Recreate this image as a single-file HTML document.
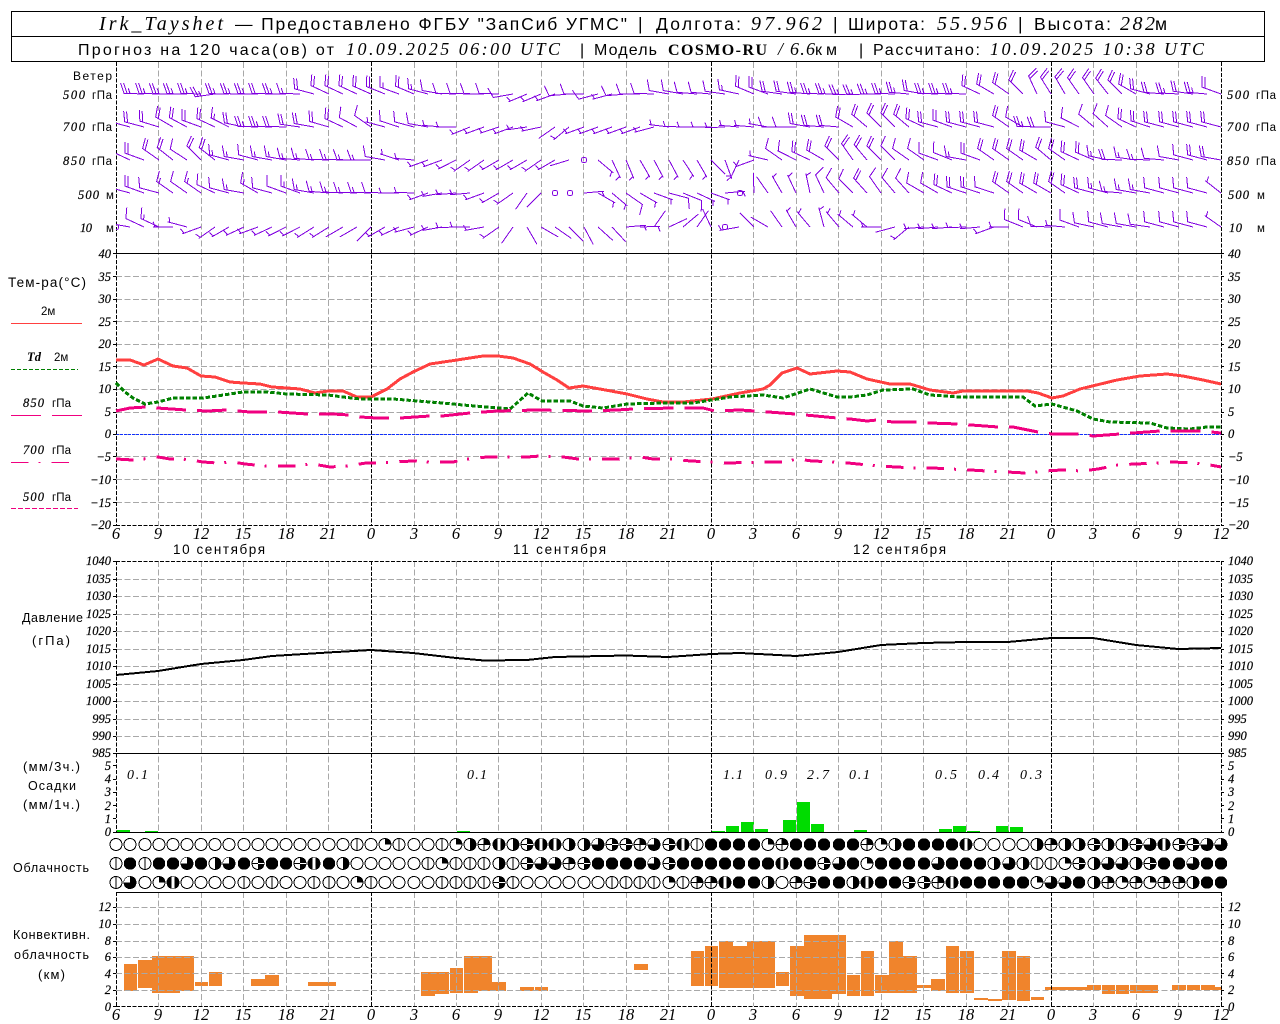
<!DOCTYPE html>
<html lang="ru"><head><meta charset="utf-8"><title>Irk_Tayshet</title>
<style>
html,body{margin:0;padding:0;background:#fff}
svg{display:block}
text{font-family:"Liberation Sans",sans-serif;fill:#000;font-size:13px}
.i{font-family:"Liberation Serif",serif;font-style:italic}
.a{font-family:"Liberation Serif",serif;font-style:italic;font-size:12.5px;stroke:#000;stroke-width:.2}
.l text,.l{text-anchor:end}
.x text{font-family:"Liberation Serif",serif;font-style:italic;font-size:16.5px;text-anchor:middle}
.h{font-size:17.5px}
.k{font-size:16px}
.p{font-family:"Liberation Serif",serif;font-style:italic;font-size:14px}
.w{fill:none;stroke:#8000e0;stroke-width:1}
</style></head><body>
<svg width="1280" height="1024" viewBox="0 0 1280 1024" xmlns="http://www.w3.org/2000/svg" shape-rendering="crispEdges">
<defs>
<clipPath id="wc"><rect x="116" y="62" width="1106" height="190"/></clipPath>
<path id="a" d="M0 0V-20"/>
<path id="b" d="M0 0V-20M0-18l5.2-1.9"/>
<path id="c" d="M0 0V-20l10.3-3.8"/>
<path id="d" d="M0 0V-20l10.3-3.8M0-17l5.2-1.9"/>
<path id="e" d="M0 0V-20l10.3-3.8M0-17l10.3-3.8"/>
<path id="g" d="M0 0V-20l10.3-3.8M0-17l10.3-3.8M0-14l5.2-1.9"/>
<g id="o0"><circle r="6" fill="#fff" stroke="#000"/></g>
<g id="o1"><circle r="6" fill="#fff" stroke="#000"/><path d="M0-6V6" stroke="#000"/></g>
<g id="o2"><circle r="6" fill="#fff" stroke="#000"/><path d="M0 0V-6A6 6 0 0 1 6 0Z"/></g>
<g id="o3"><circle r="6" fill="#fff" stroke="#000"/><path d="M0 0V-6A6 6 0 0 1 6 0Z"/><path d="M0-6V6M-6 0H6" stroke="#000"/></g>
<g id="o4"><circle r="6" fill="#fff" stroke="#000"/><path d="M0-6A6 6 0 0 1 0 6Z"/></g>
<g id="o5"><circle r="6" fill="#fff" stroke="#000"/><path d="M0-6A6 6 0 0 1 0 6Z"/><path d="M-6 0H6" stroke="#000"/><path d="M0 0H6" stroke="#fff"/></g>
<g id="o6"><circle r="6" stroke="#000"/><path d="M0 0V-6A6 6 0 0 0 -6 0Z" fill="#fff"/></g>
<g id="o7"><circle r="6" stroke="#000"/><path d="M-1.5-6H1.5V6H-1.5Z" fill="#fff"/></g>
<g id="o8"><circle r="6.2"/></g>
</defs>

<!-- header -->
<rect x="11.5" y="11.5" width="1253" height="50" fill="none" stroke="#000"/>
<path d="M11 36.5H1265" stroke="#000"/>
<text class="i" x="99" y="30" font-size="20" style="font-size:20px" textLength="124">Irk_Tayshet</text>
<text class="h" x="235" y="30" textLength="392">— Предоставлено ФГБУ "ЗапСиб УГМС"</text>
<text class="h" x="638" y="30">|</text>
<text class="h" x="656" y="30" textLength="85">Долгота:</text>
<text class="i" x="751" y="30" style="font-size:20px" textLength="71">97.962</text>
<text class="h" x="833" y="30">|</text>
<text class="h" x="848" y="30" textLength="77">Широта:</text>
<text class="i" x="937" y="30" style="font-size:20px" textLength="70">55.956</text>
<text class="h" x="1018" y="30">|</text>
<text class="h" x="1034" y="30" textLength="77">Высота:</text>
<text class="i" x="1120" y="30" style="font-size:20px" textLength="35">282</text>
<text class="h" x="1155" y="30" textLength="15">м</text>

<text class="k" x="78" y="55" textLength="256">Прогноз на 120 часа(ов) от</text>
<text class="i" x="346" y="55" style="font-size:18px;font-weight:400" textLength="214">10.09.2025 06:00 UTC</text>
<text class="k" x="580" y="55">|</text>
<text class="k" x="594" y="55" textLength="63">Модель</text>
<text x="668" y="55" style="font-family:'Liberation Serif',serif;font-weight:bold;font-size:16px" textLength="99">COSMO-RU</text>
<text class="i" x="778" y="55" style="font-size:18px">/</text>
<text class="i" x="790" y="55" style="font-size:18px" textLength="25">6.6</text>
<text class="k" x="815" y="55" textLength="22">км</text>
<text class="k" x="859" y="55">|</text>
<text class="k" x="873" y="55" textLength="107">Рассчитано:</text>
<text class="i" x="990" y="55" style="font-size:18px" textLength="214">10.09.2025 10:38 UTC</text>

<!-- orange bars -->
<path fill="#f0842c" d="M124 964h13v27h-13zM138 960h14v28h-14zM152 956h28v37h-28zM180 956h14v35h-14zM195 982h13v4h-13zM209 972h13v14h-13zM251 979h14v7h-14zM265 975h14v11h-14zM308 982h28v4h-28zM421 972h14v24h-14zM435 972h14v22h-14zM450 968h13v25h-13zM464 956h14v37h-14zM478 956h14v35h-14zM492 982h14v9h-14zM520 987h14v4h-14zM535 987h13v4h-13zM634 964h14v6h-14zM691 951h13v35h-13zM705 946h13v40h-13zM719 941h14v47h-14zM733 946h14v42h-14zM747 941h28v47h-28zM776 972h13v14h-13zM790 946h14v50h-14zM804 935h28v64h-28zM832 935h14v59h-14zM847 975h13v21h-13zM861 951h13v45h-13zM875 975h14v18h-14zM889 941h14v52h-14zM903 956h14v37h-14zM917 985h14v3h-14zM931 979h14v12h-14zM946 946h13v47h-13zM960 951h14v42h-14zM974 998h14v2h-14zM988 999h14v2h-14zM1002 951h14v49h-14zM1017 956h13v45h-13zM1031 997h13v3h-13zM1045 987h42v3h-42zM1087 985h14v5h-14zM1102 985h13v9h-13zM1116 985h13v9h-13zM1130 985h28v8h-28zM1172 985h14v5h-14zM1187 985h13v5h-13zM1201 985h14v5h-14zM1215 987h7v3h-7z"/>
<!-- green bars -->
<path fill="#00dc00" d="M117 830h13v2h-13zM145 831h13v1h-13zM457 831h13v1h-13zM712 831h13v1h-13zM726 826h13v6h-13zM741 822h13v10h-13zM755 829h13v3h-13zM783 820h13v12h-13zM797 802h13v30h-13zM811 824h13v8h-13zM854 830h13v2h-13zM939 829h13v3h-13zM953 826h13v6h-13zM967 831h13v1h-13zM996 826h13v6h-13zM1010 827h13v5h-13z"/>

<!-- grid -->
<path fill="none" stroke="#a8a8a8" stroke-dasharray="6 2.5" d="M158.5 62V525M201.5 62V525M243.5 62V525M286.5 62V525M328.5 62V525M414.5 62V525M456.5 62V525M498.5 62V525M541.5 62V525M583.5 62V525M626.5 62V525M668.5 62V525M753.5 62V525M796.5 62V525M838.5 62V525M881.5 62V525M923.5 62V525M966.5 62V525M1008.5 62V525M1093.5 62V525M1136.5 62V525M1178.5 62V525
M158.5 561V832M201.5 561V832M243.5 561V832M286.5 561V832M328.5 561V832M414.5 561V832M456.5 561V832M498.5 561V832M541.5 561V832M583.5 561V832M626.5 561V832M668.5 561V832M753.5 561V832M796.5 561V832M838.5 561V832M881.5 561V832M923.5 561V832M966.5 561V832M1008.5 561V832M1093.5 561V832M1136.5 561V832M1178.5 561V832
M158.5 892V1006M201.5 892V1006M243.5 892V1006M286.5 892V1006M328.5 892V1006M414.5 892V1006M456.5 892V1006M498.5 892V1006M541.5 892V1006M583.5 892V1006M626.5 892V1006M668.5 892V1006M753.5 892V1006M796.5 892V1006M838.5 892V1006M881.5 892V1006M923.5 892V1006M966.5 892V1006M1008.5 892V1006M1093.5 892V1006M1136.5 892V1006M1178.5 892V1006
M116 276.5H1221M116 299.5H1221M116 321.5H1221M116 344.5H1221M116 366.5H1221M116 389.5H1221M116 412.5H1221M116 434.5H1221M116 456.5H1221M116 479.5H1221M116 502.5H1221
M116 579.5H1221M116 596.5H1221M116 614.5H1221M116 631.5H1221M116 649.5H1221M116 666.5H1221M116 684.5H1221M116 701.5H1221M116 719.5H1221M116 736.5H1221
M116 907.5H1221M116 924.5H1221M116 941.5H1221M116 957.5H1221M116 973.5H1221M116 990.5H1221"/>
<path d="M116 434.5H1221" fill="none" stroke="#1030ff" stroke-dasharray="3 1"/>
<!-- axes -->
<path fill="none" stroke="#000" stroke-dasharray="4 1.5" d="M116.5 62V525M371.5 62V525M711.5 62V525M1051.5 62V525M1221.5 62V525M116.5 561V832M371.5 561V832M711.5 561V832M1051.5 561V832M1221.5 561V832M116.5 892V1006M371.5 892V1006M711.5 892V1006M1051.5 892V1006M1221.5 892V1006M116 525.5H1221M116 561.5H1221M116 1006.5H1221"/>
<path fill="none" stroke="#000" d="M116 253.5H1221M116 753.5H1221M116 832.5H1221M116 892.5H1221
M113 253.5h3M113 276.5h3M113 299.5h3M113 321.5h3M113 344.5h3M113 366.5h3M113 389.5h3M113 412.5h3M113 434.5h3M113 456.5h3M113 479.5h3M113 502.5h3M113 525.5h3
M1221 253.5h3M1221 276.5h3M1221 299.5h3M1221 321.5h3M1221 344.5h3M1221 366.5h3M1221 389.5h3M1221 412.5h3M1221 434.5h3M1221 456.5h3M1221 479.5h3M1221 502.5h3M1221 525.5h3
M113 561.5h3M113 579.5h3M113 596.5h3M113 614.5h3M113 631.5h3M113 649.5h3M113 666.5h3M113 684.5h3M113 701.5h3M113 719.5h3M113 736.5h3M113 753.5h3
M1221 561.5h3M1221 579.5h3M1221 596.5h3M1221 614.5h3M1221 631.5h3M1221 649.5h3M1221 666.5h3M1221 684.5h3M1221 701.5h3M1221 719.5h3M1221 736.5h3M1221 753.5h3
M113 765.5h3M113 779.5h3M113 792.5h3M113 805.5h3M113 818.5h3M113 832.5h3M1221 765.5h3M1221 779.5h3M1221 792.5h3M1221 805.5h3M1221 818.5h3M1221 832.5h3
M113 907.5h3M113 924.5h3M113 941.5h3M113 957.5h3M113 973.5h3M113 990.5h3M113 1006.5h3M1221 907.5h3M1221 924.5h3M1221 941.5h3M1221 957.5h3M1221 973.5h3M1221 990.5h3M1221 1006.5h3"/>

<!-- temperature curves -->
<polyline fill="none" stroke="#ff4040" stroke-width="3" points="116,360 130,360 144,365 158,359 173,366 187,368 201,376 215,377 230,382 243,383 260,384 272,387 287,388 300,389 315,393 328,391 343,391 357,397 371,397 387,389 400,379 413,372 430,364 457,360 483,356 498,356 513,358 530,364 543,372 557,380 569,388 583,386 600,389 627,394 647,399 663,402 683,402 712,399 740,393 763,389 770,385 782,373 797,368 810,374 837,371 850,372 867,379 890,384 910,384 930,390 953,393 963,391 997,391 1027,391 1038,393 1052,398 1063,396 1080,389 1117,380 1140,376 1167,374 1183,376 1203,380 1221,384"/>
<polyline fill="none" stroke="#008000" stroke-width="3" stroke-dasharray="4.5 2" points="116,383 125,392 133,398 145,404 158,402 173,398 203,398 217,396 230,394 243,392 267,392 287,394 328,395 343,397 360,399 393,399 430,402 443,403 463,405 487,407 510,409 518,402 528,393 542,401 570,401 583,406 603,408 627,404 663,403 693,403 730,397 763,395 783,398 810,389 837,397 850,397 867,395 883,390 913,389 930,395 960,397 1023,397 1035,406 1052,404 1077,411 1093,419 1110,422 1150,423 1167,428 1190,429 1207,427 1221,427"/>
<polyline fill="none" stroke="#f00080" stroke-width="3" stroke-dasharray="29.7 11" points="116,411 130,408 146,407 157,408 186,410 207,411 227,410 250,412 278,412 307,414 333,414 349,415 360,417 377,418 400,418 430,416 442,416 470,413 497,411 537,410 590,411 617,410 633,409 673,408 703,408 715,411 740,410 755,411 795,414 837,418 850,419 867,421 877,420 893,422 917,422 930,423 958,424 998,427 1013,427 1038,432 1052,434 1080,434 1093,436 1120,434 1133,433 1160,431 1202,431 1221,433"/>
<polyline fill="none" stroke="#f00080" stroke-width="3" stroke-dasharray="17.5 10 2 11.2" points="116,459 133,460 143,459 158,457 170,459 182,459 191,460 203,462 217,463 233,462 245,464 265,466 293,466 313,464 330,467 347,466 366,463 380,463 393,462 413,461 430,462 440,462 453,462 467,459 487,457 503,457 527,457 540,456 563,457 578,459 600,459 617,459 640,457 653,459 673,459 690,461 713,462 727,463 763,462 783,462 797,459 812,461 838,462 858,464 877,466 897,467 913,468 933,468 950,469 970,470 987,471 1007,472 1025,473 1045,471 1062,470 1082,471 1098,469 1118,465 1135,464 1160,463 1173,462 1193,463 1210,465 1221,467"/>
<!-- pressure -->
<polyline fill="none" stroke="#000" stroke-width="2" points="116,675 158,671 201,664 243,660 272,656 328,652.5 371,650 413,653 456,658 484,660.5 527,660 555,657 626,655.5 668,657 711,654 740,653 796,656 838,652 881,645 923,643 966,642 1008,642 1051,638 1093,638 1136,645 1178,649 1221,648"/>

<!-- wind -->
<g class="w" clip-path="url(#wc)">
<g transform="translate(0 94)">
<use href="#g" transform="translate(144)rotate(272)"/><use href="#g" transform="translate(159)rotate(272)"/><use href="#g" transform="translate(173)rotate(271)"/><use href="#g" transform="translate(187)rotate(271)"/><use href="#g" transform="translate(201)rotate(272)"/><use href="#g" transform="translate(215)rotate(262)"/><use href="#g" transform="translate(229)rotate(271)"/><use href="#g" transform="translate(244)rotate(271)"/><use href="#g" transform="translate(258)rotate(271)"/><use href="#e" transform="translate(272)rotate(272)"/><use href="#g" transform="translate(286)rotate(271)"/><use href="#d" transform="translate(300)rotate(272)"/><use href="#e" transform="translate(314)rotate(285)"/><use href="#e" transform="translate(329)rotate(295)"/><use href="#e" transform="translate(343)rotate(295)"/><use href="#e" transform="translate(357)rotate(295)"/><use href="#e" transform="translate(371)rotate(294)"/><use href="#e" transform="translate(385)rotate(292)"/><use href="#d" transform="translate(399)rotate(290)"/><use href="#e" transform="translate(414)rotate(293)"/><use href="#d" transform="translate(428)rotate(285)"/><use href="#c" transform="translate(442)rotate(280)"/><use href="#c" transform="translate(456)rotate(272)"/><use href="#c" transform="translate(470)rotate(272)"/><use href="#c" transform="translate(484)rotate(271)"/><use href="#c" transform="translate(499)rotate(272)"/><use href="#c" transform="translate(513)rotate(260)"/><use href="#b" transform="translate(527)rotate(247)"/><use href="#b" transform="translate(541)rotate(247)"/><use href="#b" transform="translate(555)rotate(250)"/><use href="#c" transform="translate(569)rotate(265)"/><use href="#c" transform="translate(584)rotate(270)"/><use href="#c" transform="translate(598)rotate(255)"/><use href="#b" transform="translate(612)rotate(255)"/><use href="#c" transform="translate(626)rotate(265)"/><use href="#c" transform="translate(640)rotate(270)"/><use href="#c" transform="translate(654)rotate(272)"/><use href="#c" transform="translate(669)rotate(280)"/><use href="#c" transform="translate(683)rotate(280)"/><use href="#c" transform="translate(697)rotate(275)"/><use href="#c" transform="translate(711)rotate(275)"/><use href="#c" transform="translate(725)rotate(278)"/><use href="#d" transform="translate(739)rotate(282)"/><use href="#e" transform="translate(754)rotate(293)"/><use href="#e" transform="translate(768)rotate(290)"/><use href="#e" transform="translate(782)rotate(278)"/><use href="#e" transform="translate(796)rotate(278)"/><use href="#g" transform="translate(810)rotate(275)"/><use href="#g" transform="translate(824)rotate(272)"/><use href="#g" transform="translate(839)rotate(271)"/><use href="#g" transform="translate(853)rotate(268)"/><use href="#g" transform="translate(867)rotate(268)"/><use href="#g" transform="translate(881)rotate(270)"/><use href="#g" transform="translate(895)rotate(272)"/><use href="#g" transform="translate(909)rotate(275)"/><use href="#e" transform="translate(924)rotate(280)"/><use href="#g" transform="translate(938)rotate(272)"/><use href="#g" transform="translate(952)rotate(272)"/><use href="#g" transform="translate(966)rotate(272)"/><use href="#e" transform="translate(980)rotate(295)"/><use href="#e" transform="translate(994)rotate(300)"/><use href="#e" transform="translate(1009)rotate(305)"/><use href="#e" transform="translate(1023)rotate(315)"/><use href="#e" transform="translate(1037)rotate(335)"/><use href="#e" transform="translate(1051)rotate(328)"/><use href="#e" transform="translate(1065)rotate(330)"/><use href="#e" transform="translate(1079)rotate(325)"/><use href="#e" transform="translate(1094)rotate(325)"/><use href="#e" transform="translate(1108)rotate(322)"/><use href="#e" transform="translate(1122)rotate(315)"/><use href="#e" transform="translate(1136)rotate(300)"/><use href="#e" transform="translate(1150)rotate(285)"/><use href="#e" transform="translate(1164)rotate(275)"/><use href="#g" transform="translate(1179)rotate(273)"/><use href="#e" transform="translate(1193)rotate(278)"/><use href="#g" transform="translate(1207)rotate(275)"/><use href="#e" transform="translate(1221)rotate(290)"/>
</g>
<g transform="translate(0 127)">
<use href="#a" transform="translate(130)rotate(285)"/><use href="#e" transform="translate(144)rotate(285)"/><use href="#e" transform="translate(159)rotate(287)"/><use href="#e" transform="translate(173)rotate(300)"/><use href="#e" transform="translate(187)rotate(298)"/><use href="#e" transform="translate(201)rotate(290)"/><use href="#e" transform="translate(215)rotate(295)"/><use href="#d" transform="translate(229)rotate(297)"/><use href="#e" transform="translate(244)rotate(282)"/><use href="#g" transform="translate(258)rotate(272)"/><use href="#g" transform="translate(272)rotate(272)"/><use href="#e" transform="translate(286)rotate(272)"/><use href="#e" transform="translate(300)rotate(278)"/><use href="#e" transform="translate(314)rotate(280)"/><use href="#e" transform="translate(329)rotate(286)"/><use href="#e" transform="translate(343)rotate(295)"/><use href="#c" transform="translate(357)rotate(298)"/><use href="#c" transform="translate(371)rotate(305)"/><use href="#b" transform="translate(385)rotate(285)"/><use href="#c" transform="translate(399)rotate(288)"/><use href="#c" transform="translate(414)rotate(285)"/><use href="#c" transform="translate(428)rotate(280)"/><use href="#b" transform="translate(442)rotate(275)"/><use href="#b" transform="translate(456)rotate(270)"/><use href="#b" transform="translate(470)rotate(248)"/><use href="#b" transform="translate(484)rotate(250)"/><use href="#b" transform="translate(499)rotate(252)"/><use href="#b" transform="translate(513)rotate(250)"/><use href="#b" transform="translate(527)rotate(262)"/><use href="#b" transform="translate(541)rotate(258)"/><use href="#a" transform="translate(555)rotate(235)"/><use href="#b" transform="translate(569)rotate(230)"/><use href="#b" transform="translate(584)rotate(250)"/><use href="#b" transform="translate(598)rotate(250)"/><use href="#b" transform="translate(612)rotate(250)"/><use href="#b" transform="translate(626)rotate(250)"/><use href="#b" transform="translate(640)rotate(250)"/><use href="#b" transform="translate(654)rotate(255)"/><use href="#b" transform="translate(669)rotate(277)"/><use href="#b" transform="translate(683)rotate(272)"/><use href="#b" transform="translate(697)rotate(270)"/><use href="#b" transform="translate(711)rotate(270)"/><use href="#b" transform="translate(725)rotate(268)"/><use href="#b" transform="translate(739)rotate(275)"/><use href="#b" transform="translate(754)rotate(275)"/><use href="#b" transform="translate(768)rotate(280)"/><use href="#c" transform="translate(782)rotate(270)"/><use href="#c" transform="translate(796)rotate(270)"/><use href="#e" transform="translate(810)rotate(280)"/><use href="#e" transform="translate(824)rotate(275)"/><use href="#e" transform="translate(839)rotate(275)"/><use href="#e" transform="translate(853)rotate(300)"/><use href="#e" transform="translate(867)rotate(310)"/><use href="#e" transform="translate(881)rotate(315)"/><use href="#e" transform="translate(895)rotate(315)"/><use href="#e" transform="translate(909)rotate(310)"/><use href="#e" transform="translate(924)rotate(295)"/><use href="#e" transform="translate(938)rotate(285)"/><use href="#e" transform="translate(952)rotate(290)"/><use href="#e" transform="translate(966)rotate(285)"/><use href="#e" transform="translate(980)rotate(285)"/><use href="#e" transform="translate(994)rotate(285)"/><use href="#e" transform="translate(1009)rotate(305)"/><use href="#c" transform="translate(1023)rotate(300)"/><use href="#g" transform="translate(1037)rotate(272)"/><use href="#e" transform="translate(1051)rotate(270)"/><use href="#c" transform="translate(1065)rotate(285)"/><use href="#c" transform="translate(1079)rotate(297)"/><use href="#c" transform="translate(1094)rotate(310)"/><use href="#c" transform="translate(1108)rotate(312)"/><use href="#c" transform="translate(1122)rotate(305)"/><use href="#e" transform="translate(1136)rotate(295)"/><use href="#e" transform="translate(1150)rotate(288)"/><use href="#e" transform="translate(1164)rotate(285)"/><use href="#e" transform="translate(1179)rotate(285)"/><use href="#e" transform="translate(1193)rotate(285)"/><use href="#e" transform="translate(1207)rotate(285)"/><use href="#e" transform="translate(1221)rotate(285)"/>
</g>
<g transform="translate(0 160)">
<use href="#a" transform="translate(130)rotate(295)"/><use href="#e" transform="translate(144)rotate(290)"/><use href="#e" transform="translate(159)rotate(305)"/><use href="#e" transform="translate(173)rotate(308)"/><use href="#c" transform="translate(187)rotate(303)"/><use href="#e" transform="translate(201)rotate(315)"/><use href="#e" transform="translate(215)rotate(308)"/><use href="#d" transform="translate(229)rotate(285)"/><use href="#d" transform="translate(244)rotate(280)"/><use href="#c" transform="translate(258)rotate(285)"/><use href="#d" transform="translate(272)rotate(280)"/><use href="#d" transform="translate(286)rotate(280)"/><use href="#d" transform="translate(300)rotate(275)"/><use href="#d" transform="translate(314)rotate(275)"/><use href="#d" transform="translate(329)rotate(272)"/><use href="#d" transform="translate(343)rotate(272)"/><use href="#d" transform="translate(357)rotate(271)"/><use href="#d" transform="translate(371)rotate(270)"/><use href="#c" transform="translate(385)rotate(280)"/><use href="#b" transform="translate(399)rotate(288)"/><use href="#b" transform="translate(414)rotate(275)"/><use href="#b" transform="translate(428)rotate(250)"/><use href="#b" transform="translate(442)rotate(250)"/><use href="#b" transform="translate(456)rotate(243)"/><use href="#b" transform="translate(470)rotate(235)"/><use href="#b" transform="translate(484)rotate(235)"/><use href="#b" transform="translate(499)rotate(240)"/><use href="#b" transform="translate(513)rotate(240)"/><use href="#b" transform="translate(527)rotate(240)"/><use href="#b" transform="translate(541)rotate(235)"/><use href="#b" transform="translate(555)rotate(240)"/><use href="#a" transform="translate(569)rotate(253)"/><use href="#b" transform="translate(598)rotate(130)"/><use href="#b" transform="translate(612)rotate(155)"/><use href="#b" transform="translate(626)rotate(157)"/><use href="#b" transform="translate(640)rotate(150)"/><use href="#b" transform="translate(654)rotate(152)"/><use href="#b" transform="translate(669)rotate(152)"/><use href="#b" transform="translate(683)rotate(147)"/><use href="#b" transform="translate(697)rotate(150)"/><use href="#a" transform="translate(711)rotate(135)"/><use href="#b" transform="translate(725)rotate(160)"/><use href="#b" transform="translate(739)rotate(205)"/><use href="#b" transform="translate(754)rotate(250)"/><use href="#b" transform="translate(768)rotate(283)"/><use href="#c" transform="translate(782)rotate(305)"/><use href="#c" transform="translate(796)rotate(297)"/><use href="#e" transform="translate(810)rotate(295)"/><use href="#e" transform="translate(824)rotate(300)"/><use href="#e" transform="translate(839)rotate(315)"/><use href="#e" transform="translate(853)rotate(325)"/><use href="#e" transform="translate(867)rotate(320)"/><use href="#e" transform="translate(881)rotate(315)"/><use href="#c" transform="translate(895)rotate(315)"/><use href="#c" transform="translate(909)rotate(305)"/><use href="#c" transform="translate(924)rotate(305)"/><use href="#c" transform="translate(938)rotate(290)"/><use href="#c" transform="translate(952)rotate(292)"/><use href="#d" transform="translate(966)rotate(280)"/><use href="#e" transform="translate(980)rotate(290)"/><use href="#e" transform="translate(994)rotate(305)"/><use href="#e" transform="translate(1009)rotate(305)"/><use href="#e" transform="translate(1023)rotate(305)"/><use href="#e" transform="translate(1037)rotate(300)"/><use href="#e" transform="translate(1051)rotate(310)"/><use href="#e" transform="translate(1065)rotate(305)"/><use href="#e" transform="translate(1079)rotate(295)"/><use href="#e" transform="translate(1094)rotate(293)"/><use href="#d" transform="translate(1108)rotate(282)"/><use href="#e" transform="translate(1122)rotate(272)"/><use href="#d" transform="translate(1136)rotate(278)"/><use href="#d" transform="translate(1150)rotate(272)"/><use href="#c" transform="translate(1164)rotate(275)"/><use href="#c" transform="translate(1179)rotate(280)"/><use href="#c" transform="translate(1193)rotate(285)"/><use href="#e" transform="translate(1207)rotate(285)"/><use href="#e" transform="translate(1221)rotate(280)"/>
<circle class="w" cx="584" r="2.7"/>
</g>
<g transform="translate(0 193)">
<use href="#a" transform="translate(130)rotate(285)"/><use href="#e" transform="translate(144)rotate(290)"/><use href="#c" transform="translate(159)rotate(285)"/><use href="#d" transform="translate(173)rotate(305)"/><use href="#c" transform="translate(187)rotate(305)"/><use href="#d" transform="translate(201)rotate(305)"/><use href="#c" transform="translate(215)rotate(295)"/><use href="#c" transform="translate(229)rotate(285)"/><use href="#d" transform="translate(244)rotate(280)"/><use href="#d" transform="translate(258)rotate(300)"/><use href="#c" transform="translate(272)rotate(285)"/><use href="#c" transform="translate(286)rotate(290)"/><use href="#d" transform="translate(300)rotate(290)"/><use href="#d" transform="translate(314)rotate(280)"/><use href="#d" transform="translate(329)rotate(275)"/><use href="#d" transform="translate(343)rotate(273)"/><use href="#d" transform="translate(357)rotate(272)"/><use href="#d" transform="translate(371)rotate(272)"/><use href="#c" transform="translate(385)rotate(272)"/><use href="#b" transform="translate(399)rotate(270)"/><use href="#b" transform="translate(414)rotate(272)"/><use href="#b" transform="translate(428)rotate(250)"/><use href="#b" transform="translate(442)rotate(260)"/><use href="#b" transform="translate(456)rotate(265)"/><use href="#b" transform="translate(470)rotate(265)"/><use href="#b" transform="translate(484)rotate(250)"/><use href="#b" transform="translate(499)rotate(240)"/><use href="#b" transform="translate(513)rotate(235)"/><use href="#a" transform="translate(527)rotate(215)"/><use href="#a" transform="translate(541)rotate(225)"/><use href="#b" transform="translate(584)rotate(85)"/><use href="#b" transform="translate(598)rotate(120)"/><use href="#b" transform="translate(612)rotate(130)"/><use href="#c" transform="translate(626)rotate(125)"/><use href="#b" transform="translate(640)rotate(120)"/><use href="#b" transform="translate(654)rotate(110)"/><use href="#c" transform="translate(669)rotate(105)"/><use href="#c" transform="translate(683)rotate(112)"/><use href="#b" transform="translate(697)rotate(115)"/><use href="#b" transform="translate(711)rotate(110)"/><use href="#b" transform="translate(725)rotate(85)"/><use href="#a" transform="translate(754)rotate(358)"/><use href="#a" transform="translate(768)rotate(325)"/><use href="#b" transform="translate(782)rotate(330)"/><use href="#b" transform="translate(796)rotate(335)"/><use href="#b" transform="translate(810)rotate(348)"/><use href="#c" transform="translate(824)rotate(335)"/><use href="#c" transform="translate(839)rotate(320)"/><use href="#c" transform="translate(853)rotate(315)"/><use href="#e" transform="translate(867)rotate(318)"/><use href="#c" transform="translate(881)rotate(325)"/><use href="#c" transform="translate(895)rotate(320)"/><use href="#c" transform="translate(909)rotate(318)"/><use href="#c" transform="translate(924)rotate(300)"/><use href="#c" transform="translate(938)rotate(300)"/><use href="#e" transform="translate(952)rotate(295)"/><use href="#e" transform="translate(966)rotate(288)"/><use href="#e" transform="translate(980)rotate(288)"/><use href="#c" transform="translate(994)rotate(288)"/><use href="#e" transform="translate(1009)rotate(305)"/><use href="#e" transform="translate(1023)rotate(305)"/><use href="#e" transform="translate(1037)rotate(300)"/><use href="#e" transform="translate(1051)rotate(300)"/><use href="#e" transform="translate(1065)rotate(305)"/><use href="#e" transform="translate(1079)rotate(295)"/><use href="#e" transform="translate(1094)rotate(285)"/><use href="#d" transform="translate(1108)rotate(285)"/><use href="#d" transform="translate(1122)rotate(275)"/><use href="#d" transform="translate(1136)rotate(280)"/><use href="#d" transform="translate(1150)rotate(280)"/><use href="#c" transform="translate(1164)rotate(285)"/><use href="#c" transform="translate(1179)rotate(285)"/><use href="#c" transform="translate(1193)rotate(285)"/><use href="#c" transform="translate(1207)rotate(285)"/><use href="#b" transform="translate(1221)rotate(308)"/>
<circle class="w" cx="555" r="2.7"/><circle class="w" cx="570" r="2.7"/><circle class="w" cx="740" r="2.7"/>
</g>
<g transform="translate(0 227)">
<circle class="w" cx="116" r="2.7"/>
<use href="#a" transform="translate(130)rotate(280)"/><use href="#c" transform="translate(144)rotate(295)"/><use href="#d" transform="translate(159)rotate(295)"/><use href="#b" transform="translate(173)rotate(270)"/><use href="#b" transform="translate(187)rotate(285)"/><use href="#b" transform="translate(201)rotate(250)"/><use href="#b" transform="translate(215)rotate(235)"/><use href="#b" transform="translate(229)rotate(240)"/><use href="#b" transform="translate(244)rotate(245)"/><use href="#b" transform="translate(258)rotate(250)"/><use href="#b" transform="translate(272)rotate(245)"/><use href="#b" transform="translate(286)rotate(243)"/><use href="#b" transform="translate(300)rotate(243)"/><use href="#b" transform="translate(314)rotate(238)"/><use href="#b" transform="translate(329)rotate(238)"/><use href="#a" transform="translate(343)rotate(240)"/><use href="#a" transform="translate(357)rotate(240)"/><use href="#a" transform="translate(371)rotate(225)"/><use href="#b" transform="translate(385)rotate(240)"/><use href="#b" transform="translate(399)rotate(245)"/><use href="#b" transform="translate(414)rotate(255)"/><use href="#b" transform="translate(428)rotate(245)"/><use href="#b" transform="translate(442)rotate(260)"/><use href="#b" transform="translate(456)rotate(268)"/><use href="#b" transform="translate(470)rotate(270)"/><use href="#b" transform="translate(484)rotate(260)"/><use href="#b" transform="translate(499)rotate(235)"/><use href="#a" transform="translate(513)rotate(215)"/><use href="#a" transform="translate(527)rotate(150)"/><use href="#a" transform="translate(541)rotate(120)"/><use href="#a" transform="translate(555)rotate(125)"/><use href="#a" transform="translate(569)rotate(135)"/><use href="#a" transform="translate(584)rotate(152)"/><use href="#a" transform="translate(598)rotate(132)"/><use href="#a" transform="translate(612)rotate(137)"/><use href="#b" transform="translate(626)rotate(85)"/><use href="#b" transform="translate(640)rotate(88)"/><use href="#a" transform="translate(654)rotate(35)"/><use href="#a" transform="translate(669)rotate(65)"/><use href="#a" transform="translate(683)rotate(50)"/><use href="#a" transform="translate(697)rotate(35)"/><use href="#a" transform="translate(711)rotate(335)"/><circle class="w" cx="725" r="2.7"/><use href="#b" transform="translate(739)rotate(260)"/><use href="#a" transform="translate(754)rotate(315)"/><use href="#a" transform="translate(768)rotate(300)"/><use href="#a" transform="translate(782)rotate(325)"/><use href="#b" transform="translate(796)rotate(330)"/><use href="#b" transform="translate(810)rotate(320)"/><use href="#b" transform="translate(824)rotate(345)"/><use href="#b" transform="translate(839)rotate(320)"/><use href="#b" transform="translate(853)rotate(310)"/><use href="#b" transform="translate(867)rotate(310)"/><use href="#b" transform="translate(881)rotate(270)"/><use href="#a" transform="translate(895)rotate(255)"/><use href="#b" transform="translate(909)rotate(230)"/><use href="#b" transform="translate(924)rotate(265)"/><use href="#b" transform="translate(938)rotate(265)"/><use href="#b" transform="translate(952)rotate(265)"/><use href="#b" transform="translate(966)rotate(268)"/><use href="#b" transform="translate(980)rotate(265)"/><use href="#b" transform="translate(994)rotate(250)"/><use href="#b" transform="translate(1009)rotate(270)"/><use href="#c" transform="translate(1023)rotate(292)"/><use href="#c" transform="translate(1037)rotate(292)"/><use href="#c" transform="translate(1051)rotate(272)"/><use href="#b" transform="translate(1065)rotate(275)"/><use href="#c" transform="translate(1079)rotate(290)"/><use href="#c" transform="translate(1094)rotate(282)"/><use href="#c" transform="translate(1108)rotate(285)"/><use href="#c" transform="translate(1122)rotate(280)"/><use href="#c" transform="translate(1136)rotate(280)"/><use href="#c" transform="translate(1150)rotate(278)"/><use href="#c" transform="translate(1164)rotate(285)"/><use href="#c" transform="translate(1179)rotate(285)"/><use href="#c" transform="translate(1193)rotate(285)"/><use href="#c" transform="translate(1207)rotate(285)"/><use href="#b" transform="translate(1221)rotate(305)"/>
</g>
</g>

<!-- clouds -->
<g transform="translate(0 844.5)">
<use href="#o0" x="116"/><use href="#o0" x="130"/><use href="#o0" x="145"/><use href="#o0" x="159"/><use href="#o0" x="173"/><use href="#o0" x="187"/><use href="#o0" x="201"/><use href="#o0" x="215"/><use href="#o0" x="229"/><use href="#o0" x="244"/><use href="#o0" x="258"/><use href="#o0" x="272"/><use href="#o0" x="286"/><use href="#o0" x="300"/><use href="#o0" x="314"/><use href="#o0" x="329"/><use href="#o0" x="343"/><use href="#o1" x="357"/><use href="#o0" x="371"/><use href="#o2" x="385"/><use href="#o1" x="399"/><use href="#o0" x="414"/><use href="#o0" x="428"/><use href="#o1" x="442"/><use href="#o2" x="456"/><use href="#o4" x="470"/><use href="#o3" x="484"/><use href="#o7" x="499"/><use href="#o4" x="513"/><use href="#o5" x="527"/><use href="#o7" x="541"/><use href="#o7" x="555"/><use href="#o4" x="569"/><use href="#o4" x="584"/><use href="#o6" x="598"/><use href="#o5" x="612"/><use href="#o5" x="626"/><use href="#o3" x="640"/><use href="#o6" x="654"/><use href="#o5" x="669"/><use href="#o7" x="683"/><use href="#o1" x="697"/><use href="#o8" x="711"/><use href="#o8" x="725"/><use href="#o8" x="739"/><use href="#o8" x="754"/><use href="#o2" x="768"/><use href="#o3" x="782"/><use href="#o8" x="796"/><use href="#o8" x="810"/><use href="#o8" x="824"/><use href="#o8" x="839"/><use href="#o8" x="853"/><use href="#o3" x="867"/><use href="#o2" x="881"/><use href="#o4" x="895"/><use href="#o8" x="909"/><use href="#o8" x="924"/><use href="#o8" x="938"/><use href="#o8" x="952"/><use href="#o7" x="966"/><use href="#o0" x="980"/><use href="#o0" x="994"/><use href="#o0" x="1009"/><use href="#o0" x="1023"/><use href="#o4" x="1037"/><use href="#o3" x="1051"/><use href="#o4" x="1065"/><use href="#o4" x="1079"/><use href="#o5" x="1094"/><use href="#o4" x="1108"/><use href="#o4" x="1122"/><use href="#o5" x="1136"/><use href="#o6" x="1150"/><use href="#o7" x="1164"/><use href="#o5" x="1179"/><use href="#o5" x="1193"/><use href="#o6" x="1207"/><use href="#o6" x="1221"/>
</g>
<g transform="translate(0 863.5)">
<use href="#o1" x="116"/><use href="#o8" x="130"/><use href="#o1" x="145"/><use href="#o8" x="159"/><use href="#o8" x="173"/><use href="#o6" x="187"/><use href="#o8" x="201"/><use href="#o4" x="215"/><use href="#o6" x="229"/><use href="#o8" x="244"/><use href="#o5" x="258"/><use href="#o8" x="272"/><use href="#o8" x="286"/><use href="#o5" x="300"/><use href="#o7" x="314"/><use href="#o8" x="329"/><use href="#o4" x="343"/><use href="#o0" x="357"/><use href="#o0" x="371"/><use href="#o0" x="385"/><use href="#o0" x="399"/><use href="#o0" x="414"/><use href="#o1" x="428"/><use href="#o2" x="442"/><use href="#o1" x="456"/><use href="#o1" x="470"/><use href="#o1" x="484"/><use href="#o4" x="499"/><use href="#o1" x="513"/><use href="#o5" x="527"/><use href="#o6" x="541"/><use href="#o6" x="555"/><use href="#o3" x="569"/><use href="#o5" x="584"/><use href="#o8" x="598"/><use href="#o8" x="612"/><use href="#o8" x="626"/><use href="#o8" x="640"/><use href="#o6" x="654"/><use href="#o5" x="669"/><use href="#o8" x="683"/><use href="#o8" x="697"/><use href="#o8" x="711"/><use href="#o8" x="725"/><use href="#o8" x="739"/><use href="#o8" x="754"/><use href="#o8" x="768"/><use href="#o7" x="782"/><use href="#o8" x="796"/><use href="#o8" x="810"/><use href="#o5" x="824"/><use href="#o6" x="839"/><use href="#o8" x="853"/><use href="#o2" x="867"/><use href="#o8" x="881"/><use href="#o8" x="895"/><use href="#o8" x="909"/><use href="#o8" x="924"/><use href="#o6" x="938"/><use href="#o8" x="952"/><use href="#o8" x="966"/><use href="#o8" x="980"/><use href="#o4" x="994"/><use href="#o6" x="1009"/><use href="#o4" x="1023"/><use href="#o1" x="1037"/><use href="#o1" x="1051"/><use href="#o2" x="1065"/><use href="#o5" x="1079"/><use href="#o4" x="1094"/><use href="#o6" x="1108"/><use href="#o6" x="1122"/><use href="#o4" x="1136"/><use href="#o5" x="1150"/><use href="#o8" x="1164"/><use href="#o8" x="1179"/><use href="#o6" x="1193"/><use href="#o8" x="1207"/><use href="#o8" x="1221"/>
</g>
<g transform="translate(0 882.5)">
<use href="#o1" x="116"/><use href="#o6" x="130"/><use href="#o0" x="145"/><use href="#o2" x="159"/><use href="#o7" x="173"/><use href="#o0" x="187"/><use href="#o0" x="201"/><use href="#o0" x="215"/><use href="#o0" x="229"/><use href="#o1" x="244"/><use href="#o0" x="258"/><use href="#o1" x="272"/><use href="#o0" x="286"/><use href="#o0" x="300"/><use href="#o1" x="314"/><use href="#o1" x="329"/><use href="#o0" x="343"/><use href="#o2" x="357"/><use href="#o1" x="371"/><use href="#o0" x="385"/><use href="#o0" x="399"/><use href="#o0" x="414"/><use href="#o0" x="428"/><use href="#o1" x="442"/><use href="#o1" x="456"/><use href="#o1" x="470"/><use href="#o1" x="484"/><use href="#o5" x="499"/><use href="#o1" x="513"/><use href="#o0" x="527"/><use href="#o0" x="541"/><use href="#o0" x="555"/><use href="#o0" x="569"/><use href="#o0" x="584"/><use href="#o0" x="598"/><use href="#o1" x="612"/><use href="#o1" x="626"/><use href="#o1" x="640"/><use href="#o1" x="654"/><use href="#o2" x="669"/><use href="#o1" x="683"/><use href="#o3" x="697"/><use href="#o3" x="711"/><use href="#o7" x="725"/><use href="#o8" x="739"/><use href="#o8" x="754"/><use href="#o4" x="768"/><use href="#o0" x="782"/><use href="#o3" x="796"/><use href="#o5" x="810"/><use href="#o8" x="824"/><use href="#o8" x="839"/><use href="#o4" x="853"/><use href="#o7" x="867"/><use href="#o8" x="881"/><use href="#o8" x="895"/><use href="#o5" x="909"/><use href="#o5" x="924"/><use href="#o3" x="938"/><use href="#o7" x="952"/><use href="#o8" x="966"/><use href="#o8" x="980"/><use href="#o8" x="994"/><use href="#o8" x="1009"/><use href="#o8" x="1023"/><use href="#o2" x="1037"/><use href="#o6" x="1051"/><use href="#o6" x="1065"/><use href="#o8" x="1079"/><use href="#o4" x="1094"/><use href="#o3" x="1108"/><use href="#o2" x="1122"/><use href="#o3" x="1136"/><use href="#o2" x="1150"/><use href="#o3" x="1164"/><use href="#o3" x="1179"/><use href="#o4" x="1193"/><use href="#o8" x="1207"/><use href="#o8" x="1221"/>
</g>

<!-- left labels, wind -->
<text x="73" y="80" style="font-size:12px" textLength="39">Ветер</text>
<g style="font-size:12px">
<text class="a" x="63" y="99" textLength="22">500</text><text x="92" y="99" style="font-size:11.5px" textLength="20">гПа</text>
<text class="a" x="63" y="131" textLength="22">700</text><text x="92" y="131" style="font-size:11.5px" textLength="20">гПа</text>
<text class="a" x="63" y="165" textLength="22">850</text><text x="92" y="165" style="font-size:11.5px" textLength="20">гПа</text>
<text class="a" x="78" y="199" textLength="21">500</text><text x="106" y="199" style="font-size:11.5px">м</text>
<text class="a" x="80" y="232" textLength="12">10</text><text x="106" y="232" style="font-size:11.5px">м</text>
<text class="a" x="1227" y="99" textLength="22">500</text><text x="1256" y="99" style="font-size:11.5px" textLength="20">гПа</text>
<text class="a" x="1227" y="131" textLength="22">700</text><text x="1256" y="131" style="font-size:11.5px" textLength="20">гПа</text>
<text class="a" x="1227" y="165" textLength="22">850</text><text x="1256" y="165" style="font-size:11.5px" textLength="20">гПа</text>
<text class="a" x="1228" y="199" textLength="21">500</text><text x="1257" y="199" style="font-size:11.5px">м</text>
<text class="a" x="1229" y="232" textLength="13">10</text><text x="1257" y="232" style="font-size:11.5px">м</text>
</g>

<!-- temp legend -->
<text x="8" y="287" style="font-size:13.5px" textLength="78">Тем-ра(°С)</text>
<text x="41" y="315" style="font-size:11.5px">2м</text>
<path d="M11 323.5H82" stroke="#ff4040"/>
<text class="i" x="27" y="361" style="font-size:12.5px;font-weight:bold" textLength="14">Td</text><text x="54" y="361" style="font-size:11.5px">2м</text>
<path d="M11 369.5H78" stroke="#008000" stroke-dasharray="4 2"/>
<text class="a" x="23" y="407" textLength="21">850</text><text x="52" y="407" style="font-size:11.5px" textLength="19">гПа</text>
<path d="M11 415.5H41M52 415.5H82" stroke="#f00080"/>
<text class="a" x="23" y="454" textLength="21">700</text><text x="52" y="454" style="font-size:11.5px" textLength="19">гПа</text>
<path d="M11 462.5H78" stroke="#f00080" stroke-dasharray="17.5 10 2 11.2"/>
<text class="a" x="23" y="501" textLength="21">500</text><text x="52" y="501" style="font-size:11.5px" textLength="19">гПа</text>
<path d="M11 508.5H78" stroke="#f00080" stroke-dasharray="5 2"/>

<!-- temp axis -->
<g class="l">
<text class="a" x="111" y="258">40</text><text class="a" x="111" y="281">35</text><text class="a" x="111" y="303">30</text><text class="a" x="111" y="326">25</text><text class="a" x="111" y="348">20</text><text class="a" x="111" y="371">15</text><text class="a" x="111" y="393">10</text><text class="a" x="111" y="416">5</text><text class="a" x="111" y="438">0</text><text class="a" x="111" y="461">−5</text><text class="a" x="111" y="484">−10</text><text class="a" x="111" y="507">−15</text><text class="a" x="111" y="529">−20</text>
<text class="a" x="111" y="565">1040</text><text class="a" x="111" y="583">1035</text><text class="a" x="111" y="600">1030</text><text class="a" x="111" y="618">1025</text><text class="a" x="111" y="635">1020</text><text class="a" x="111" y="653">1015</text><text class="a" x="111" y="670">1010</text><text class="a" x="111" y="688">1005</text><text class="a" x="111" y="705">1000</text><text class="a" x="111" y="723">995</text><text class="a" x="111" y="740">990</text><text class="a" x="111" y="757">985</text>
<text class="a" x="111" y="770">5</text><text class="a" x="111" y="783">4</text><text class="a" x="111" y="796">3</text><text class="a" x="111" y="810">2</text><text class="a" x="111" y="823">1</text><text class="a" x="111" y="836">0</text>
<text class="a" x="111" y="911">12</text><text class="a" x="111" y="928">10</text><text class="a" x="111" y="945">8</text><text class="a" x="111" y="961">6</text><text class="a" x="111" y="978">4</text><text class="a" x="111" y="994">2</text><text class="a" x="111" y="1011">0</text>
</g>
<g>
<text class="a" x="1228" y="258">40</text><text class="a" x="1228" y="281">35</text><text class="a" x="1228" y="303">30</text><text class="a" x="1228" y="326">25</text><text class="a" x="1228" y="348">20</text><text class="a" x="1228" y="371">15</text><text class="a" x="1228" y="393">10</text><text class="a" x="1228" y="416">5</text><text class="a" x="1228" y="438">0</text><text class="a" x="1228" y="461">−5</text><text class="a" x="1228" y="484">−10</text><text class="a" x="1228" y="507">−15</text><text class="a" x="1228" y="529">−20</text>
<text class="a" x="1228" y="565">1040</text><text class="a" x="1228" y="583">1035</text><text class="a" x="1228" y="600">1030</text><text class="a" x="1228" y="618">1025</text><text class="a" x="1228" y="635">1020</text><text class="a" x="1228" y="653">1015</text><text class="a" x="1228" y="670">1010</text><text class="a" x="1228" y="688">1005</text><text class="a" x="1228" y="705">1000</text><text class="a" x="1228" y="723">995</text><text class="a" x="1228" y="740">990</text><text class="a" x="1228" y="757">985</text>
<text class="a" x="1228" y="770">5</text><text class="a" x="1228" y="783">4</text><text class="a" x="1228" y="796">3</text><text class="a" x="1228" y="810">2</text><text class="a" x="1228" y="823">1</text><text class="a" x="1228" y="836">0</text>
<text class="a" x="1228" y="911">12</text><text class="a" x="1228" y="928">10</text><text class="a" x="1228" y="945">8</text><text class="a" x="1228" y="961">6</text><text class="a" x="1228" y="978">4</text><text class="a" x="1228" y="994">2</text><text class="a" x="1228" y="1011">0</text>
</g>

<!-- x axes -->
<g class="x">
<text x="116" y="539">6</text><text x="158" y="539">9</text><text x="201" y="539">12</text><text x="243" y="539">15</text><text x="286" y="539">18</text><text x="328" y="539">21</text><text x="371" y="539">0</text><text x="414" y="539">3</text><text x="456" y="539">6</text><text x="498" y="539">9</text><text x="541" y="539">12</text><text x="583" y="539">15</text><text x="626" y="539">18</text><text x="668" y="539">21</text><text x="711" y="539">0</text><text x="753" y="539">3</text><text x="796" y="539">6</text><text x="838" y="539">9</text><text x="881" y="539">12</text><text x="923" y="539">15</text><text x="966" y="539">18</text><text x="1008" y="539">21</text><text x="1051" y="539">0</text><text x="1093" y="539">3</text><text x="1136" y="539">6</text><text x="1178" y="539">9</text><text x="1221" y="539">12</text>
<text x="116" y="1020">6</text><text x="158" y="1020">9</text><text x="201" y="1020">12</text><text x="243" y="1020">15</text><text x="286" y="1020">18</text><text x="328" y="1020">21</text><text x="371" y="1020">0</text><text x="414" y="1020">3</text><text x="456" y="1020">6</text><text x="498" y="1020">9</text><text x="541" y="1020">12</text><text x="583" y="1020">15</text><text x="626" y="1020">18</text><text x="668" y="1020">21</text><text x="711" y="1020">0</text><text x="753" y="1020">3</text><text x="796" y="1020">6</text><text x="838" y="1020">9</text><text x="881" y="1020">12</text><text x="923" y="1020">15</text><text x="966" y="1020">18</text><text x="1008" y="1020">21</text><text x="1051" y="1020">0</text><text x="1093" y="1020">3</text><text x="1136" y="1020">6</text><text x="1178" y="1020">9</text><text x="1221" y="1020">12</text>
</g>
<text x="173" y="554" style="font-size:13.5px" textLength="92">10 сентября</text>
<text x="513" y="554" style="font-size:13.5px" textLength="93">11 сентября</text>
<text x="853" y="554" style="font-size:13.5px" textLength="93">12 сентября</text>

<!-- side labels -->
<text x="22" y="622" style="font-size:12.5px" textLength="61">Давление</text>
<text x="32" y="645" style="font-size:13px" textLength="38">(гПа)</text>
<text x="23" y="771" style="font-size:13px" textLength="57">(мм/3ч.)</text>
<text x="28" y="790" style="font-size:12.5px" textLength="48">Осадки</text>
<text x="23" y="809" style="font-size:13px" textLength="57">(мм/1ч.)</text>
<text x="13" y="872" style="font-size:12.5px" textLength="76">Облачность</text>
<text x="13" y="939" style="font-size:12.5px" textLength="77">Конвективн.</text>
<text x="14" y="959" style="font-size:12.5px" textLength="75">облачность</text>
<text x="38" y="979" style="font-size:13px" textLength="27">(км)</text>

<!-- precip totals -->
<text class="p" x="127" y="779" textLength="21">0.1</text>
<text class="p" x="467" y="779" textLength="20">0.1</text>
<text class="p" x="723" y="779" textLength="20">1.1</text>
<text class="p" x="765" y="779" textLength="22">0.9</text>
<text class="p" x="807" y="779" textLength="22">2.7</text>
<text class="p" x="849" y="779" textLength="21">0.1</text>
<text class="p" x="935" y="779" textLength="22">0.5</text>
<text class="p" x="978" y="779" textLength="21">0.4</text>
<text class="p" x="1020" y="779" textLength="22">0.3</text>
</svg>
</body></html>
